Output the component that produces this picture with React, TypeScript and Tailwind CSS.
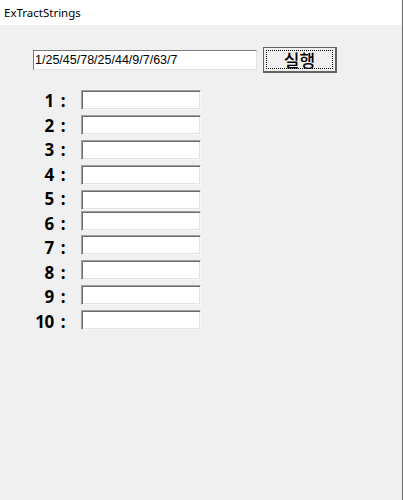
// ExTractStrings — classic WinForms-style window: path input, run button, ten result boxes.
import React from 'react';

const rows = ['1', '2', '3', '4', '5', '6', '7', '8', '9', '10'];

const sunken =
  'bg-white border border-t-[#a0a0a0] border-l-[#a0a0a0] border-b-[#f8f8f8] border-r-[#f8f8f8] shadow-[inset_1px_1px_0_#6d6d6d,inset_-1px_-1px_0_#e3e3e3]';

const boxGap = (n: string, i: number) => {
  if (i === 0) return '';
  if (n === '6') return 'mt-[1px]';
  if (n === '7') return 'mt-[4px]';
  return 'mt-[5px]';
};

export default function App() {
  return (
    <div className="w-[403px] h-[500px] bg-[#f0f0f0] border-r border-[#6a6a6a] flex flex-col font-['Noto_Sans',sans-serif]">
      {/* Title bar */}
      <div className="h-[25px] bg-white flex items-center pl-[4px] text-[11.5px] text-black">
        ExTractStrings
      </div>

      {/* Input + button */}
      <div className="mt-[22px] ml-[33px] flex items-center gap-[6px] h-[26px]">
        <div className="w-[224px] h-[20px] bg-white border border-t-[#7a7a7a] border-l-[#7a7a7a] border-b-[#e3e3e3] border-r-[#e3e3e3] flex items-center pl-[1px] text-[12.5px] font-['Liberation_Sans',sans-serif] text-black">
          1/25/45/78/25/44/9/7/63/7
        </div>
        <button className="w-[74px] h-[26px] bg-[#f0f0f0] border border-[#646464] border-b-2 border-r-2 p-[2px] flex">
          <span className="flex-1 border border-dotted border-black flex items-center justify-center text-[17px] font-medium leading-none text-black font-['Noto_Sans_CJK_KR',sans-serif]">
            실행
          </span>
        </button>
      </div>

      {/* Result rows: labels and boxes in two columns */}
      <div className="mt-[17px] flex items-start">
        <div className="w-[65px] -mt-[1px] flex flex-col">
          {rows.map((n) => (
            <div key={n} className="flex justify-end gap-[7px] text-[17px] leading-[24.5px] font-bold text-black tracking-[-0.5px]">
              <span>{n}</span>
              <span>:</span>
            </div>
          ))}
        </div>
        <div className="ml-[16px] flex flex-col">
          {rows.map((n, i) => (
            <div key={n} className={`w-[120px] h-[20px] ${sunken} ${boxGap(n, i)}`} />
          ))}
        </div>
      </div>
    </div>
  );
}
